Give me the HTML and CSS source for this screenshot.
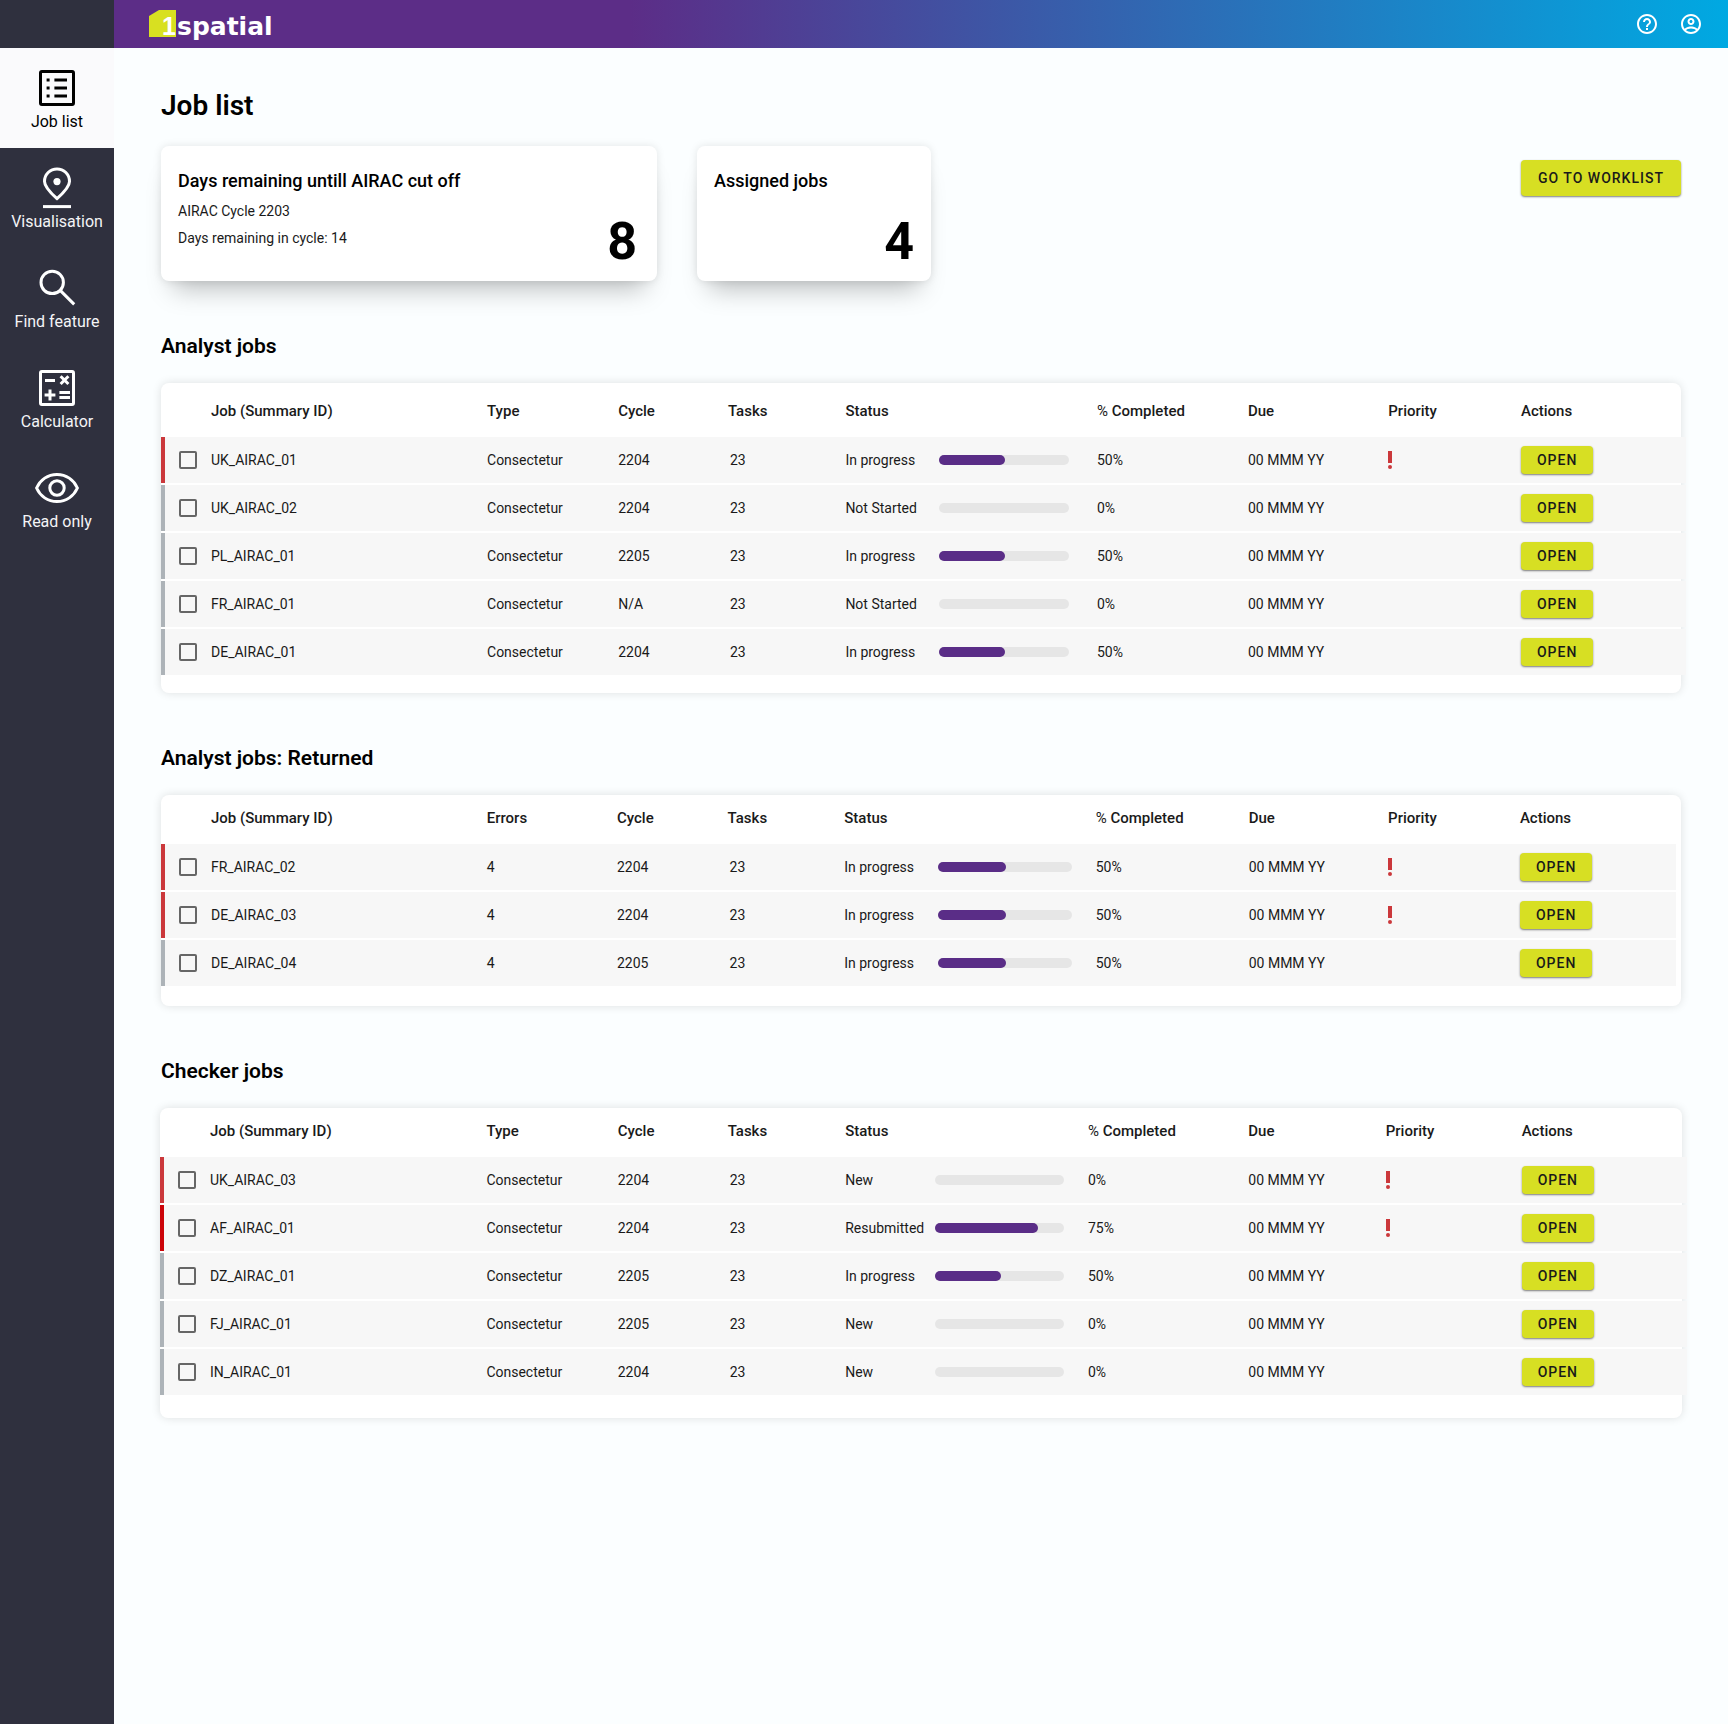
FILE: index.html
```html
<!DOCTYPE html>
<html lang="en">
<head>
    <meta charset="UTF-8">
    <meta name="viewport" content="width=device-width, initial-scale=1.0">
    <title>Job list - 1Spatial</title>
    <link rel="stylesheet" href="styles.css">
</head>
<body>
    <svg class="sprite" aria-hidden="true">
        <symbol id="priority" viewBox="10 3 4 18">
            <rect x="10" y="3" width="4" height="12"/>
            <circle cx="12" cy="19" r="2"/>
        </symbol>
    </svg>

    <aside class="sidebar">
        <nav>
            <a href="#" class="nav-item active">
                <svg viewBox="0 0 24 24">
                    <rect x="3.75" y="3.75" width="16.5" height="16.5" rx="0.7"/>
                    <path d="M10.7 8H17M10.7 12H17M10.7 16H17"/>
                    <path d="M6.8 8h1.5M6.8 12h1.5M6.8 16h1.5"/>
                </svg>
                Job list
            </a>
            <a href="#" class="nav-item">
                <svg viewBox="0 0 24 24">
                    <path d="M12 17.3C8 13.7 5.75 11 5.75 8.7a6.25 6.25 0 0 1 12.5 0C18.25 11 16 13.7 12 17.3z"/>
                    <circle class="solid" cx="12" cy="8.8" r="1.8"/>
                    <path d="M5 21.3h14"/>
                </svg>
                Visualisation
            </a>
            <a href="#" class="nav-item">
                <svg viewBox="0 0 24 24">
                    <circle cx="9.6" cy="9.2" r="5.6"/>
                    <path d="M13.6 13.2l7 7"/>
                </svg>
                Find feature
            </a>
            <a href="#" class="nav-item">
                <svg viewBox="0 0 24 24">
                    <rect x="3.75" y="3.75" width="16.5" height="16.5" rx="0.7"/>
                    <path d="M6 8.2h5M13.8 6.1l3.9 3.9M17.7 6.1l-3.9 3.9"/>
                    <path d="M8.5 12.8v5.4M5.8 15.5h5.4M13.2 14.2h5.3M13.2 16.7h5.3"/>
                </svg>
                Calculator
            </a>
            <a href="#" class="nav-item">
                <svg viewBox="0 0 24 24">
                    <path d="M1.8 12C3.6 7.9 7.4 5.2 12 5.2s8.4 2.7 10.2 6.8c-1.8 4.1-5.6 6.8-10.2 6.8S3.6 16.1 1.8 12z"/>
                    <circle cx="12" cy="12" r="3.6"/>
                </svg>
                Read only
            </a>
        </nav>
    </aside>

    <div class="page">
        <header class="topbar">
            <a href="#" class="logo" aria-label="1Spatial">
                <svg viewBox="0 0 128 32" width="128" height="32">
                    <path class="logo-block" d="M0 8L10 2h17v27H0z"/>
                    <text class="logo-one" x="13" y="27">1</text>
                    <text x="28" y="27">spatial</text>
                </svg>
            </a>
            <div class="topbar-actions">
                <button type="button" class="icon-button" aria-label="Help">
                    <svg viewBox="0 0 24 24"><path d="M11 18h2v-2h-2v2zm1-16C6.48 2 2 6.48 2 12s4.48 10 10 10 10-4.480 10-10S17.520 2 12 2zm0 18c-4.410 0-8-3.590-8-8s3.590-8 8-8 8 3.590 8 8-3.590 8-8 8zm0-14c-2.210 0-4 1.790-4 4h2c0-1.100.9-2 2-2s2 .9 2 2c0 2-3 1.750-3 5h2c0-2.250 3-2.500 3-5 0-2.210-1.790-4-4-4z"/></svg>
                </button>
                <button type="button" class="icon-button" aria-label="Account">
                    <svg viewBox="0 0 24 24"><path d="M12 2C6.480 2 2 6.480 2 12s4.480 10 10 10 10-4.480 10-10S17.520 2 12 2zM7.070 18.280c.43-.9 3.050-1.780 4.930-1.780s4.510.88 4.930 1.780C15.570 19.360 13.860 20 12 20s-3.570-.64-4.930-1.720zm11.290-1.450c-1.430-1.740-4.900-2.330-6.360-2.330s-4.930.59-6.360 2.330C4.620 15.490 4 13.820 4 12c0-4.410 3.590-8 8-8s8 3.590 8 8c0 1.820-.62 3.490-1.640 4.830zM12 6c-1.940 0-3.500 1.560-3.500 3.500S10.060 13 12 13s3.500-1.560 3.500-3.500S13.940 6 12 6zm0 5c-.83 0-1.500-.67-1.500-1.500S11.170 8 12 8s1.500.67 1.500 1.500S12.830 11 12 11z"/></svg>
                </button>
            </div>
        </header>

        <main class="content">
            <h1>Job list</h1>

            <div class="summary">
                <div class="card card-cycle">
                    <div>
                        <h3>Days remaining untill AIRAC cut off</h3>
                        <p>AIRAC Cycle 2203</p>
                        <p>Days remaining in cycle: 14</p>
                    </div>
                    <span class="card-number">8</span>
                </div>
                <div class="card card-assigned">
                    <h3>Assigned jobs</h3>
                    <span class="card-number">4</span>
                </div>
                <button type="button" class="button button-large">Go to worklist</button>
            </div>

            <section>
                <h2>Analyst jobs</h2>
                <div class="table-card analyst">
                    <table>
                        <thead>
                            <tr>
                                <th class="col-check"></th>
                                <th class="col-job">Job (Summary ID)</th>
                                <th class="col-type">Type</th>
                                <th class="col-cycle">Cycle</th>
                                <th class="col-tasks">Tasks</th>
                                <th class="col-status">Status</th>
                                <th class="col-completed"><span class="percent">%</span> Completed</th>
                                <th class="col-due">Due</th>
                                <th class="col-priority">Priority</th>
                                <th>Actions</th>
                            </tr>
                        </thead>
                        <tbody>
                            <tr class="high">
                                <td><input type="checkbox" id="a1"></td>
                                <td><label for="a1">UK_AIRAC_01</label></td>
                                <td>Consectetur</td>
                                <td>2204</td>
                                <td class="tasks">23</td>
                                <td><div class="status"><span>In progress</span><div class="bar"><div class="bar-fill" style="width: 51%"></div></div></div></td>
                                <td>50%</td>
                                <td>00 MMM YY</td>
                                <td><svg class="priority" role="img" aria-label="High priority"><use href="#priority"/></svg></td>
                                <td><button type="button" class="button">Open</button></td>
                            </tr>
                            <tr>
                                <td><input type="checkbox" id="a2"></td>
                                <td><label for="a2">UK_AIRAC_02</label></td>
                                <td>Consectetur</td>
                                <td>2204</td>
                                <td class="tasks">23</td>
                                <td><div class="status"><span>Not Started</span><div class="bar"></div></div></td>
                                <td>0%</td>
                                <td>00 MMM YY</td>
                                <td></td>
                                <td><button type="button" class="button">Open</button></td>
                            </tr>
                            <tr>
                                <td><input type="checkbox" id="a3"></td>
                                <td><label for="a3">PL_AIRAC_01</label></td>
                                <td>Consectetur</td>
                                <td>2205</td>
                                <td class="tasks">23</td>
                                <td><div class="status"><span>In progress</span><div class="bar"><div class="bar-fill" style="width: 51%"></div></div></div></td>
                                <td>50%</td>
                                <td>00 MMM YY</td>
                                <td></td>
                                <td><button type="button" class="button">Open</button></td>
                            </tr>
                            <tr>
                                <td><input type="checkbox" id="a4"></td>
                                <td><label for="a4">FR_AIRAC_01</label></td>
                                <td>Consectetur</td>
                                <td>N/A</td>
                                <td class="tasks">23</td>
                                <td><div class="status"><span>Not Started</span><div class="bar"></div></div></td>
                                <td>0%</td>
                                <td>00 MMM YY</td>
                                <td></td>
                                <td><button type="button" class="button">Open</button></td>
                            </tr>
                            <tr>
                                <td><input type="checkbox" id="a5"></td>
                                <td><label for="a5">DE_AIRAC_01</label></td>
                                <td>Consectetur</td>
                                <td>2204</td>
                                <td class="tasks">23</td>
                                <td><div class="status"><span>In progress</span><div class="bar"><div class="bar-fill" style="width: 51%"></div></div></div></td>
                                <td>50%</td>
                                <td>00 MMM YY</td>
                                <td></td>
                                <td><button type="button" class="button">Open</button></td>
                            </tr>
                        </tbody>
                    </table>
                </div>
            </section>

            <section>
                <h2>Analyst jobs: Returned</h2>
                <div class="table-card returned">
                    <table>
                        <thead>
                            <tr>
                                <th class="col-check"></th>
                                <th class="col-job">Job (Summary ID)</th>
                                <th class="col-type">Errors</th>
                                <th class="col-cycle">Cycle</th>
                                <th class="col-tasks">Tasks</th>
                                <th class="col-status">Status</th>
                                <th class="col-completed"><span class="percent">%</span> Completed</th>
                                <th class="col-due">Due</th>
                                <th class="col-priority">Priority</th>
                                <th>Actions</th>
                            </tr>
                        </thead>
                        <tbody>
                            <tr class="high">
                                <td><input type="checkbox" id="r1"></td>
                                <td><label for="r1">FR_AIRAC_02</label></td>
                                <td>4</td>
                                <td>2204</td>
                                <td class="tasks">23</td>
                                <td><div class="status"><span>In progress</span><div class="bar"><div class="bar-fill" style="width: 51%"></div></div></div></td>
                                <td>50%</td>
                                <td>00 MMM YY</td>
                                <td><svg class="priority" role="img" aria-label="High priority"><use href="#priority"/></svg></td>
                                <td><button type="button" class="button">Open</button></td>
                            </tr>
                            <tr class="high">
                                <td><input type="checkbox" id="r2"></td>
                                <td><label for="r2">DE_AIRAC_03</label></td>
                                <td>4</td>
                                <td>2204</td>
                                <td class="tasks">23</td>
                                <td><div class="status"><span>In progress</span><div class="bar"><div class="bar-fill" style="width: 51%"></div></div></div></td>
                                <td>50%</td>
                                <td>00 MMM YY</td>
                                <td><svg class="priority" role="img" aria-label="High priority"><use href="#priority"/></svg></td>
                                <td><button type="button" class="button">Open</button></td>
                            </tr>
                            <tr>
                                <td><input type="checkbox" id="r3"></td>
                                <td><label for="r3">DE_AIRAC_04</label></td>
                                <td>4</td>
                                <td>2205</td>
                                <td class="tasks">23</td>
                                <td><div class="status"><span>In progress</span><div class="bar"><div class="bar-fill" style="width: 51%"></div></div></div></td>
                                <td>50%</td>
                                <td>00 MMM YY</td>
                                <td></td>
                                <td><button type="button" class="button">Open</button></td>
                            </tr>
                        </tbody>
                    </table>
                </div>
            </section>

            <section>
                <h2>Checker jobs</h2>
                <div class="table-card checker">
                    <table>
                        <thead>
                            <tr>
                                <th class="col-check"></th>
                                <th class="col-job">Job (Summary ID)</th>
                                <th class="col-type">Type</th>
                                <th class="col-cycle">Cycle</th>
                                <th class="col-tasks">Tasks</th>
                                <th class="col-status">Status</th>
                                <th class="col-completed"><span class="percent">%</span> Completed</th>
                                <th class="col-due">Due</th>
                                <th class="col-priority">Priority</th>
                                <th>Actions</th>
                            </tr>
                        </thead>
                        <tbody>
                            <tr class="high">
                                <td><input type="checkbox" id="c1"></td>
                                <td><label for="c1">UK_AIRAC_03</label></td>
                                <td>Consectetur</td>
                                <td>2204</td>
                                <td class="tasks">23</td>
                                <td><div class="status"><span>New</span><div class="bar"></div></div></td>
                                <td>0%</td>
                                <td>00 MMM YY</td>
                                <td><svg class="priority" role="img" aria-label="High priority"><use href="#priority"/></svg></td>
                                <td><button type="button" class="button">Open</button></td>
                            </tr>
                            <tr class="urgent">
                                <td><input type="checkbox" id="c2"></td>
                                <td><label for="c2">AF_AIRAC_01</label></td>
                                <td>Consectetur</td>
                                <td>2204</td>
                                <td class="tasks">23</td>
                                <td><div class="status"><span>Resubmitted</span><div class="bar"><div class="bar-fill" style="width: 80%"></div></div></div></td>
                                <td>75%</td>
                                <td>00 MMM YY</td>
                                <td><svg class="priority" role="img" aria-label="High priority"><use href="#priority"/></svg></td>
                                <td><button type="button" class="button">Open</button></td>
                            </tr>
                            <tr>
                                <td><input type="checkbox" id="c3"></td>
                                <td><label for="c3">DZ_AIRAC_01</label></td>
                                <td>Consectetur</td>
                                <td>2205</td>
                                <td class="tasks">23</td>
                                <td><div class="status"><span>In progress</span><div class="bar"><div class="bar-fill" style="width: 51%"></div></div></div></td>
                                <td>50%</td>
                                <td>00 MMM YY</td>
                                <td></td>
                                <td><button type="button" class="button">Open</button></td>
                            </tr>
                            <tr>
                                <td><input type="checkbox" id="c4"></td>
                                <td><label for="c4">FJ_AIRAC_01</label></td>
                                <td>Consectetur</td>
                                <td>2205</td>
                                <td class="tasks">23</td>
                                <td><div class="status"><span>New</span><div class="bar"></div></div></td>
                                <td>0%</td>
                                <td>00 MMM YY</td>
                                <td></td>
                                <td><button type="button" class="button">Open</button></td>
                            </tr>
                            <tr>
                                <td><input type="checkbox" id="c5"></td>
                                <td><label for="c5">IN_AIRAC_01</label></td>
                                <td>Consectetur</td>
                                <td>2204</td>
                                <td class="tasks">23</td>
                                <td><div class="status"><span>New</span><div class="bar"></div></div></td>
                                <td>0%</td>
                                <td>00 MMM YY</td>
                                <td></td>
                                <td><button type="button" class="button">Open</button></td>
                            </tr>
                        </tbody>
                    </table>
                </div>
            </section>
        </main>
    </div>
</body>
</html>
```

FILE: styles.css
```css
* {
    box-sizing: border-box;
}
body {
    display: flex;
    min-height: 100vh;
    margin: 0;
    font-family: Roboto, Arial, sans-serif;
    font-size: 14px;
    color: #1a1a1a;
    background-color: #fbfeff;
}
h1, h2, h3, p {
    margin: 0;
    color: #000;
}
.sprite {
    display: none;
}

/* Sidebar */
.sidebar {
    flex: none;
    width: 114px;
    padding-top: 48px;
    background-color: #2f303e;
}
.nav-item {
    display: flex;
    flex-direction: column;
    align-items: center;
    height: 100px;
    padding-top: 16px;
    font-size: 16px;
    line-height: 20px;
    color: #f4f4f6;
    text-decoration: none;
    white-space: nowrap;
}
.nav-item svg {
    width: 48px;
    height: 48px;
    fill: none;
    stroke: #fff;
    stroke-width: 1.5;
}
.nav-item .solid {
    fill: #fff;
    stroke: none;
}
.nav-item.active {
    color: #000;
    background-color: #fafafc;
}
.nav-item.active svg {
    stroke: #000;
}

/* Top bar */
.page {
    flex: 1;
    min-width: 0;
}
.topbar {
    display: flex;
    align-items: center;
    justify-content: space-between;
    height: 48px;
    padding: 0 25px 0 35px;
    background: linear-gradient(90deg, #5c2d87 0%, #5c2d87 32%, #00a9e2 100%);
}
.logo svg {
    display: block;
}
.logo-block {
    fill: #d8e021;
}
.logo text {
    font-family: "DejaVu Sans", sans-serif;
    font-size: 25px;
    font-weight: bold;
    fill: #fff;
}
.logo .logo-one {
    font-family: "Liberation Sans", Arial, sans-serif;
}
.topbar-actions {
    display: flex;
    gap: 20px;
}
.icon-button {
    width: 24px;
    height: 24px;
    padding: 0;
    border: none;
    background: none;
    cursor: pointer;
}
.icon-button svg {
    display: block;
    fill: #fff;
}

/* Content */
.content {
    padding: 40px 47px;
}
h1 {
    margin-bottom: 22px;
    font-size: 28px;
    font-weight: 600;
    line-height: 36px;
}
h2 {
    margin: 51px 0 23px;
    font-size: 21px;
    font-weight: 600;
    line-height: 28px;
}
h3 {
    font-size: 18px;
    font-weight: 500;
    line-height: 24px;
}

.summary {
    display: flex;
    align-items: flex-start;
    gap: 40px;
}
.card {
    display: flex;
    justify-content: space-between;
    height: 135px;
    padding: 23px 17px 9px;
    background-color: #fff;
    border-radius: 8px;
    box-shadow: 0 0 8px rgba(0, 0, 0, 0.1), 0 20px 24px -12px rgba(0, 0, 0, 0.25);
}
.card-cycle {
    width: 496px;
    padding-right: 20px;
}
.card-assigned {
    width: 234px;
    flex-direction: column;
}
.card h3 {
    margin-bottom: 5px;
}
.card p {
    line-height: 27px;
    color: #1a1a1a;
}
.card-number {
    align-self: flex-end;
    font-size: 52px;
    font-weight: 700;
    line-height: 60px;
    color: #000;
}

.button {
    display: block;
    height: 28px;
    padding: 0 16px;
    border: none;
    border-radius: 4px;
    background-color: #d7df23;
    box-shadow: 0 1px 2px rgba(0, 0, 0, 0.5);
    font-family: inherit;
    font-size: 14px;
    font-weight: 500;
    letter-spacing: 1px;
    text-transform: uppercase;
    color: #1a1a1a;
    cursor: pointer;
}
.button-large {
    height: 36px;
    margin: 14px 0 0 auto;
    padding: 0 17px;
}

/* Job tables */
.table-card {
    padding-bottom: 16px;
    background-color: #fff;
    border-radius: 8px;
    box-shadow: 0 0 10px rgba(0, 0, 0, 0.12);
}
table {
    width: calc(100% + 5px);
    table-layout: fixed;
    border-collapse: separate;
    border-spacing: 0 2px;
}
th, td {
    padding: 0;
    text-align: left;
    white-space: nowrap;
}
th {
    height: 45px;
    padding-bottom: 4px;
    font-size: 15px;
    font-weight: 500;
}
td {
    height: 46px;
    background-color: #f7f7f7;
}
td:first-child {
    padding-left: 14px;
    border-left: 4px solid #adb3b8;
}
.high td:first-child {
    border-left-color: #cb383b;
}
.urgent td:first-child {
    border-left-color: #cc0308;
}
.percent {
    font-weight: 400;
}
.tasks {
    padding-left: 2px;
}

.col-check {
    width: 50px;
}
.col-job {
    width: 18.1%;
}
.col-type {
    width: 8.6%;
}
.col-cycle {
    width: 7.2%;
}
.col-tasks {
    width: 7.7%;
}
.col-status {
    width: 16.5%;
}
.col-completed {
    width: 9.9%;
}
.col-due {
    width: 9.2%;
}
.col-priority {
    width: 8.7%;
}

.analyst th {
    height: 50px;
    padding: 2px 0 0;
}
.returned {
    padding-bottom: 18px;
}
.returned table {
    width: calc(100% - 5px);
}
.returned .col-job {
    width: 18.2%;
}
.returned .col-cycle {
    width: 7.3%;
}
.returned .col-status {
    width: 16.6%;
}
.returned .col-completed {
    width: 10.1%;
}
.checker {
    margin: 0 -1px;
    padding-bottom: 21px;
}
.checker .col-status {
    width: 15.9%;
}
.checker .col-completed {
    width: 10.5%;
}
.checker .col-due {
    width: 9%;
}
.checker .col-priority {
    width: 8.9%;
}

input[type="checkbox"] {
    display: block;
    appearance: none;
    width: 18px;
    height: 18px;
    margin: 0;
    border: 2px solid #666;
    border-radius: 2px;
    background-color: transparent;
}
input[type="checkbox"]:checked {
    background-color: #5c2d87;
}

.status {
    display: flex;
    align-items: center;
    padding-right: 28px;
}
.status span {
    flex: none;
    width: 94px;
}
.bar {
    flex: 1;
    height: 10px;
    border-radius: 5px;
    background-color: #e6e6e6;
}
.bar-fill {
    height: 10px;
    border-radius: 5px;
    background-color: #5a2d87;
}
.returned .status,
.checker .status {
    padding-right: 24px;
}
.checker .status span {
    width: 90px;
}
.priority {
    display: block;
    width: 4px;
    height: 18px;
    fill: #cb383b;
}
```
